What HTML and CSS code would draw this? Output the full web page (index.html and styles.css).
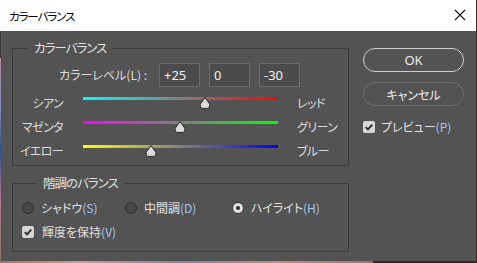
FILE: index.html
```html
<!DOCTYPE html>
<html lang="ja">
<head>
<meta charset="utf-8">
<title>カラーバランス</title>
<link rel="stylesheet" href="styles.css">
</head>
<body>
<div class="dialog">
  <div class="titlebar">
    <span class="title">カラーバランス</span>
    <svg class="close" width="12" height="12" viewBox="0 0 12 12"><path d="M1 1 L11 11 M11 1 L1 11" stroke="#111" stroke-width="1.1" fill="none"/></svg>
  </div>
  <div class="body">
    <div class="main">
      <fieldset class="group group-balance">
        <legend>カラーバランス</legend>
        <div class="levels">
          <span class="levels-label">カラーレベル(L) :</span>
          <span class="num">+25</span>
          <span class="num">0</span>
          <span class="num">-30</span>
        </div>
        <div class="sliders">
          <span class="lbl-left">シアン</span>
          <div class="track-wrap"><div class="track track-cr"></div><svg class="thumb" style="left:116px" width="12" height="12" viewBox="0 0 12 12"><path d="M6 0.6 L10.8 7.2 Q11.4 11.3 8.3 11.4 H3.7 Q0.6 11.3 1.2 7.2 Z" fill="#dcdcdc" stroke="#262626" stroke-width="1"/></svg></div>
          <span class="lbl-right">レッド</span>
          <span class="lbl-left">マゼンタ</span>
          <div class="track-wrap"><div class="track track-mg"></div><svg class="thumb" style="left:91px" width="12" height="12" viewBox="0 0 12 12"><path d="M6 0.6 L10.8 7.2 Q11.4 11.3 8.3 11.4 H3.7 Q0.6 11.3 1.2 7.2 Z" fill="#dcdcdc" stroke="#262626" stroke-width="1"/></svg></div>
          <span class="lbl-right">グリーン</span>
          <span class="lbl-left">イエロー</span>
          <div class="track-wrap"><div class="track track-yb"></div><svg class="thumb" style="left:62px" width="12" height="12" viewBox="0 0 12 12"><path d="M6 0.6 L10.8 7.2 Q11.4 11.3 8.3 11.4 H3.7 Q0.6 11.3 1.2 7.2 Z" fill="#dcdcdc" stroke="#262626" stroke-width="1"/></svg></div>
          <span class="lbl-right">ブルー</span>
        </div>
      </fieldset>
      <fieldset class="group group-tone">
        <legend>階調のバランス</legend>
        <div class="radios">
          <span class="radio r1"><span class="circle"></span><span class="rtext">シャドウ<span class="acc">(S)</span></span></span>
          <span class="radio r2"><span class="circle"></span><span class="rtext">中間調<span class="acc">(D)</span></span></span>
          <span class="radio r3"><span class="circle on"></span><span class="rtext">ハイライト<span class="acc">(H)</span></span></span>
        </div>
        <div class="check-row">
          <span class="checkbox"><svg width="10" height="10" viewBox="0 0 10 10"><path d="M1.8 5.2 L4 7.4 L8.3 2.6" stroke="#2a2a2a" stroke-width="1.8" fill="none"/></svg></span>
          <span class="ctext">輝度を保持<span class="acc">(V)</span></span>
        </div>
      </fieldset>
    </div>
    <div class="side">
      <div class="btn btn-ok">OK</div>
      <div class="btn btn-cancel">キャンセル</div>
      <div class="check-row preview">
        <span class="checkbox"><svg width="10" height="10" viewBox="0 0 10 10"><path d="M1.8 5.2 L4 7.4 L8.3 2.6" stroke="#2a2a2a" stroke-width="1.8" fill="none"/></svg></span>
        <span class="ctext">プレビュー<span class="acc">(P)</span></span>
      </div>
    </div>
  </div>
</div>
</body>
</html>
```
FILE: styles.css
```css
html, body {
  margin: 0;
  padding: 0;
  width: 477px;
  height: 263px;
  overflow: hidden;
}
body {
  background:
    linear-gradient(to bottom, #ffffff 0 31px, #3a3a3a 31px 58px, #b48aa0 58px, #7a8cc0 110px, #2c4c9c 150px, #b07890 200px, #8a7460 263px) left top / 1px 100% no-repeat,
    linear-gradient(90deg, #9a7868, #c0a090 80px, #7088a8 180px, #b89078 280px, #8a7a70 373px) left bottom / 373px 2px no-repeat,
    #2b2b2b;
  font-family: "Noto Sans CJK JP", "Noto Sans", sans-serif;
  font-feature-settings: "palt";
}
.dialog {
  margin-left: 1px;
  width: 475px;
  height: 261px;
  background: #535353;
  display: flex;
  flex-direction: column;
}
.titlebar {
  height: 31px;
  background: #ffffff;
  display: flex;
  align-items: center;
  justify-content: space-between;
  padding: 0 10px 0 8px;
}
.title {
  font-size: 11.5px;
  letter-spacing: -1.1px;
  color: #000;
  line-height: 16px;
}
.close { display: block; margin-top: -1px; }
.body {
  display: flex;
  padding-left: 11px;
  flex: 1;
}
.main {
  width: 337px;
  display: flex;
  flex-direction: column;
}
.group {
  margin: 0;
  border: 1px solid #3c3c3c;
  padding: 0;
  min-width: 0;
}
.group legend {
  margin-left: 15px;
  padding: 0 6px;
  font-size: 12.5px;
  letter-spacing: -1px;
  line-height: 16px;
  color: #e2e2e2;
}
.group-balance {
  margin-top: 9px;
  padding-bottom: 2px;
}
.levels {
  display: flex;
  align-items: center;
  margin-top: 7px;
  height: 24px;
}
.levels-label {
  width: 134px;
  text-align: right;
  margin-right: 12px;
  font-size: 12px;
  line-height: 16px;
  color: #dcdcdc;
}
.num {
  box-sizing: border-box;
  width: 41px;
  height: 24px;
  border: 1px solid #6a6a6a;
  background: #4b4b4b;
  color: #f2f2f2;
  font-family: "Noto Sans", sans-serif;
  font-size: 13px;
  line-height: 22px;
  padding-left: 4px;
  margin-right: 9px;
}
.sliders {
  display: grid;
  grid-template-columns: 50px 195px auto;
  grid-auto-rows: 24px;
  column-gap: 20px;
  margin-top: 4px;
}
.sliders .lbl-right { margin-left: -1px; }
.lbl-left, .lbl-right {
  font-size: 12px;
  letter-spacing: -0.6px;
  line-height: 14px;
  padding-top: 5px;
  color: #dcdcdc;
}
.lbl-left { text-align: right; }
.track-wrap {
  position: relative;
  padding-top: 6px;
}
.track {
  height: 3px;
}
.track-cr { background: linear-gradient(90deg, #00ffff, #ff0000); }
.track-mg { background: linear-gradient(90deg, #ff00ff, #00ff00); }
.track-yb { background: linear-gradient(90deg, #ffff00, #0000ff); }
.thumb {
  position: absolute;
  top: 6px;
  display: block;
}
.group-tone {
  margin-top: 9px;
  padding: 9px 0 11px 9px;
}
.group-tone legend { margin-left: 15px; }
.radios {
  display: flex;
  height: 16px;
  align-items: center;
}
.radio {
  display: flex;
  align-items: center;
}
.r1 { width: 103px; }
.r2 { width: 107px; }
.circle {
  box-sizing: border-box;
  width: 12px;
  height: 12px;
  border-radius: 50%;
  border: 1px solid #2e2e2e;
  background: #464646;
  margin-right: 7px;
  display: flex;
  align-items: center;
  justify-content: center;
}
.circle.on {
  background: #e2e2e2;
  border-color: #333;
}
.circle.on::after {
  content: "";
  width: 4px;
  height: 4px;
  border-radius: 50%;
  background: #2e2e2e;
}
.rtext, .ctext {
  font-size: 12px;
  line-height: 16px;
  color: #e2e2e2;
}
.acc {
  color: #a6c6ee;
}
.check-row {
  display: flex;
  align-items: center;
  height: 16px;
  margin-top: 8px;
}
.checkbox {
  box-sizing: border-box;
  width: 12px;
  height: 12px;
  border-radius: 2px;
  background: #d6d6d6;
  margin-right: 8px;
  display: flex;
  align-items: center;
  justify-content: center;
}
.checkbox svg { display: block; }
.side {
  width: 101px;
  margin-left: 14px;
  padding-top: 17px;
  display: flex;
  flex-direction: column;
}
.btn {
  box-sizing: border-box;
  height: 24px;
  border-radius: 12px;
  display: flex;
  align-items: center;
  justify-content: center;
  color: #eeeeee;
  font-size: 12px;
}
.btn-ok {
  border: 1.5px solid #cfcfcf;
  font-family: "Noto Sans", sans-serif;
  font-size: 13px;
}
.btn-cancel {
  margin-top: 10px;
  border: 1.5px solid #6e6e6e;
}
.preview {
  margin-top: 13px;
}
.preview .checkbox { margin-right: 6px; }
```
